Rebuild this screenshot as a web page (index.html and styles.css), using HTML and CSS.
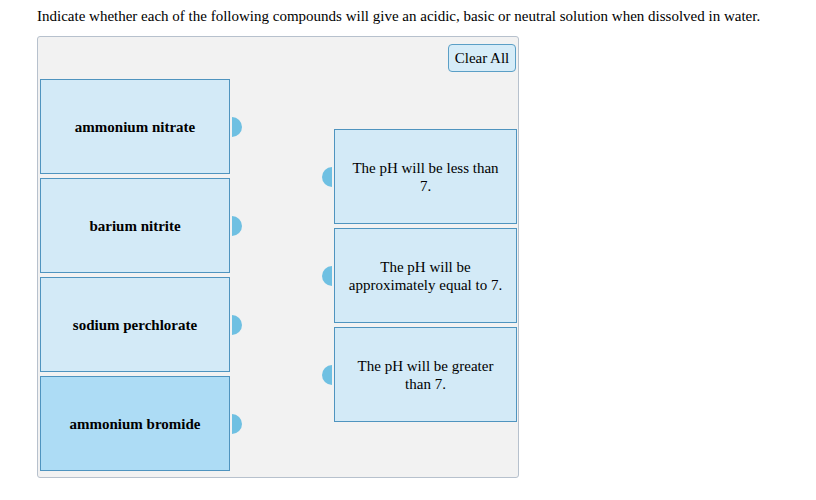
FILE: index.html
```html
<!DOCTYPE html>
<html>
<head>
<meta charset="utf-8">
<link rel="stylesheet" href="styles.css">
</head>
<body>
<div class="page">
  <p class="prompt">Indicate whether each of the following compounds will give an acidic, basic or neutral solution when dissolved in water.</p>
  <div class="panel">
    <div class="toolbar"><button class="clear">Clear All</button></div>
    <div class="columns">
      <div class="col-left">
        <div class="row"><div class="card bold">ammonium nitrate</div><span class="knob-r"></span></div>
        <div class="row"><div class="card bold">barium nitrite</div><span class="knob-r"></span></div>
        <div class="row"><div class="card bold">sodium perchlorate</div><span class="knob-r"></span></div>
        <div class="row"><div class="card bold active">ammonium bromide</div><span class="knob-r"></span></div>
      </div>
      <div class="col-right">
        <div class="row"><span class="knob-l"></span><div class="card target">The pH will be less than 7.</div></div>
        <div class="row"><span class="knob-l"></span><div class="card target">The pH will be approximately equal to 7.</div></div>
        <div class="row"><span class="knob-l"></span><div class="card target">The pH will be greater than 7.</div></div>
      </div>
    </div>
  </div>
</div>
</body>
</html>
```
FILE: styles.css
```css
html, body { margin: 0; padding: 0; background: #ffffff; }
body { font-family: "Liberation Serif", "Times New Roman", serif; color: #000; }
.page { padding: 7px 0 0 37px; }
.prompt { margin: 0; font-size: 15px; line-height: 18px; }
.panel {
  margin-top: 11px;
  width: 479px;
  box-sizing: content-box;
  border: 1px solid #b7c1cd;
  border-radius: 3px;
  background: #f2f2f2;
  padding: 0 1px 6px 0;
}
.toolbar { display: flex; justify-content: flex-end; padding: 7px 1px 0 0; }
.clear {
  font-family: "Liberation Serif", "Times New Roman", serif;
  font-size: 15px;
  height: 28px;
  width: 68px;
  padding: 0;
  background: #d6ecf8;
  border: 1px solid #5b9fc6;
  border-radius: 4px;
  color: #000;
}
.columns { display: flex; gap: 80px; padding: 7px 0 0 2px; }
.col-left, .col-right { display: flex; flex-direction: column; gap: 4px; }
.col-right { margin-top: 50px; }
.row { display: flex; align-items: center; gap: 2px; }
.card {
  box-sizing: border-box;
  width: 190px;
  height: 95px;
  border: 1px solid #4f94bf;
  background: #d3eaf7;
  display: flex;
  align-items: center;
  justify-content: center;
  text-align: center;
}
.bold { font-weight: bold; font-size: 15px; padding-top: 2px; }
.active { background: #addcf5; }
.target { width: 183px; font-size: 15px; line-height: 18px; padding: 0 12px; }
.knob-r, .knob-l { display: block; width: 10px; height: 20px; background: #6fc0e2; }
.knob-r { border-radius: 0 10px 10px 0; }
.knob-l { border-radius: 10px 0 0 10px; }
```
